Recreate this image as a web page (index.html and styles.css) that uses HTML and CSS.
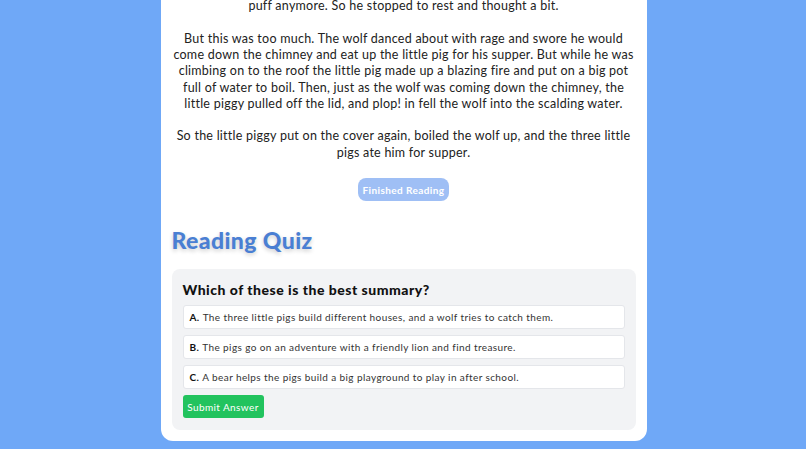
FILE: index.html
```html
<!DOCTYPE html>
<html lang="en">
<head>
  <meta charset="UTF-8">
  <meta name="viewport" content="width=device-width, initial-scale=1.0">
  <title>The Three Little Pigs - Reading Time</title>
  <link rel="stylesheet" href="styles.css">
</head>
<body>
  <div class="page">
    <div class="story-card">
      <div class="story">
        <p>Then the wolf came, as he did to the other little pigs, and said, "Little pig, little pig, let me come in." "No, no, by the hair of my chinny chin chin." "Then I'll huff, and I'll puff, and I'll blow your house in."</p>
        <p>So the wolf huffed and he puffed with all of his might until he could not huff and puff anymore. So he stopped to rest and thought a bit.</p>
        <p>But this was too much. The wolf danced about with rage and swore he would come down the chimney and eat up the little pig for his supper. But while he was climbing on to the roof the little pig made up a blazing fire and put on a big pot full of water to boil. Then, just as the wolf was coming down the chimney, the little piggy pulled off the lid, and plop! in fell the wolf into the scalding water.</p>
        <p>So the little piggy put on the cover again, boiled the wolf up, and the three little pigs ate him for supper.</p>
      </div>

      <div class="finish">
        <button class="btn-finish" disabled>Finished Reading</button>
      </div>

      <h2 class="quiz-title">Reading Quiz</h2>

      <div class="quiz">
        <h3 class="question">Which of these is the best summary?</h3>
        <div class="options">
          <label class="option"><b>A.</b> The three little pigs build different houses, and a wolf tries to catch them.</label>
          <label class="option"><b>B.</b> The pigs go on an adventure with a friendly lion and find treasure.</label>
          <label class="option"><b>C.</b> A bear helps the pigs build a big playground to play in after school.</label>
        </div>
        <button class="btn-submit">Submit Answer</button>
      </div>
    </div>
  </div>
</body>
</html>
```

FILE: styles.css
```css
* {
  margin: 0;
  padding: 0;
  box-sizing: border-box;
}

body {
  background-color: #6fa8f7;
  font-family: Lato, "Open Sans", sans-serif;
  color: #222;
}

/* keep the end of the story in view */
.page {
  height: 100vh;
  overflow: hidden;
  display: flex;
  flex-direction: column;
  justify-content: flex-end;
  align-items: center;
  padding-bottom: 8px;
}

.story-card {
  width: 486px;
  flex-shrink: 0;
  margin-left: 1px;
  background-color: #fff;
  border-radius: 0 0 12px 12px;
  padding: 20px 11px 11px;
}

.story p {
  text-align: center;
  font-size: 12.5px;
  line-height: 16.3px;
  letter-spacing: 0.25px;
  margin-bottom: 16.3px;
}

.story p:last-child {
  margin-bottom: 0;
}

.finish {
  display: flex;
  justify-content: center;
  margin-top: 17px;
}

.btn-finish {
  font-family: inherit;
  font-size: 10px;
  font-weight: bold;
  letter-spacing: 0.4px;
  white-space: nowrap;
  color: #fff;
  background-color: #9fbff5;
  border: none;
  border-radius: 8px;
  height: 23px;
  padding: 0;
  width: 91px;
}

.quiz-title {
  font-size: 23px;
  font-weight: 900;
  line-height: 28px;
  letter-spacing: 0.4px;
  color: #4a7fd3;
  text-shadow: 0 2px 4px rgba(0, 0, 0, 0.2);
  margin-top: 25px;
  margin-bottom: 15px;
}

.quiz {
  background-color: #f2f3f5;
  border-radius: 8px;
  padding: 11px 11px 12px;
}

.question {
  font-size: 14px;
  font-weight: 900;
  line-height: 20px;
  letter-spacing: 0.5px;
  color: #111;
  margin-bottom: 5px;
}

.options {
  display: flex;
  flex-direction: column;
  gap: 6px;
}

.option {
  display: flex;
  align-items: center;
  gap: 3px;
  height: 24px;
  padding: 0 6px;
  background-color: #fff;
  border: 1px solid #e4e6ea;
  border-radius: 3px;
  font-size: 10px;
  letter-spacing: 0.4px;
  color: #333;
}

.option b {
  color: #111;
}

.btn-submit {
  margin-top: 6px;
  font-family: inherit;
  font-size: 10px;
  letter-spacing: 0.4px;
  white-space: nowrap;
  color: #fff;
  background-color: #22c35e;
  border: none;
  border-radius: 3px;
  height: 23px;
  width: 81px;
}
```
